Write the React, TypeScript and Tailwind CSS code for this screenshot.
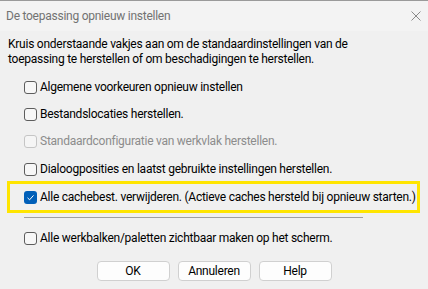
import React from "react";

function Box({ checked = false, disabled = false }: { checked?: boolean; disabled?: boolean }) {
  if (checked) {
    return (
      <div className="w-[13px] h-[13px] rounded-[3px] bg-[#005fb8] flex items-center justify-center shrink-0">
        <svg width="9" height="9" viewBox="0 0 9 9">
          <path d="M1.5 4.8 L3.6 6.8 L7.5 2.4" fill="none" stroke="#ffffff" strokeWidth="1" />
        </svg>
      </div>
    );
  }
  return (
    <div
      className={
        disabled
          ? "w-[13px] h-[13px] rounded-[3px] border border-[#c5c5c5] bg-[#f5f5f5] shrink-0"
          : "w-[13px] h-[13px] rounded-[3px] border border-[#5d5d5d] bg-[#f7f7f7] shrink-0"
      }
    />
  );
}

function Row({
  label,
  checked = false,
  disabled = false,
  className = "",
}: {
  label: string;
  checked?: boolean;
  disabled?: boolean;
  className?: string;
}) {
  return (
    <div className={"flex items-center h-[20px] gap-[3px] " + className}>
      <Box checked={checked} disabled={disabled} />
      <span className={disabled ? "text-[#8c8c8c] whitespace-nowrap" : "text-black whitespace-nowrap"}>{label}</span>
    </div>
  );
}

export default function App() {
  return (
    <div
      className="w-[428px] h-[289px] bg-[#f0f0f0] flex flex-col text-[12px] leading-[15px] tracking-[-0.25px] overflow-hidden"
      style={{ fontFamily: 'Roboto, "Noto Sans", sans-serif' }}
    >
      <div className="h-[31px] shrink-0 bg-[#f3f3f3] border-t border-[#9a9a9a] flex items-center justify-between pl-[6px] pr-[6px]">
        <span className="text-[#727272] text-[12px]">De toepassing opnieuw instellen</span>
        <svg width="10" height="10" viewBox="0 0 10 10" className="mr-[1px]">
          <path d="M0.5 0.5 L9.5 9.5 M9.5 0.5 L0.5 9.5" stroke="#8a8a8a" strokeWidth="1" />
        </svg>
      </div>
      <div className="flex flex-col pt-[6px]">
        <div className="pl-[8px] text-black flex flex-col">
          <span className="whitespace-nowrap">Kruis onderstaande vakjes aan om de standaardinstellingen van de</span>
          <span className="whitespace-nowrap">toepassing te herstellen of om beschadigingen te herstellen.</span>
        </div>
        <div className="flex flex-col pl-[24px]">
          <Row className="mt-[10px]" label="Algemene voorkeuren opnieuw instellen" />
          <Row className="mt-[7px]" label="Bestandslocaties herstellen." />
          <Row className="mt-[7px]" label="Standaardconfiguratie van werkvlak herstellen." disabled />
          <Row className="mt-[8px]" label="Dialoogposities en laatst gebruikte instellingen herstellen." />
        </div>
        <div className="ml-[7px] mt-[2px] w-[413px] h-[32px] border-[3px] border-[#ffe500] flex items-center pl-[14px]">
          <Row label="Alle cachebest. verwijderen. (Actieve caches hersteld bij opnieuw starten.)" checked />
        </div>
        <div className="ml-[24px] mt-[4px] w-[339px] h-px bg-[#a0a0a0]" />
        <div className="pl-[24px]">
          <Row className="mt-[10px]" label="Alle werkbalken/paletten zichtbaar maken op het scherm." />
        </div>
        <div className="mt-[13px] flex justify-center gap-[8px]">
          {["OK", "Annuleren", "Help"].map((b) => (
            <button
              key={b}
              className="w-[73px] h-[20px] rounded-[4px] border border-[#d0d0d0] bg-[#fdfdfd] text-black text-[12px] leading-none flex items-center justify-center"
            >
              {b}
            </button>
          ))}
        </div>
      </div>
    </div>
  );
}
